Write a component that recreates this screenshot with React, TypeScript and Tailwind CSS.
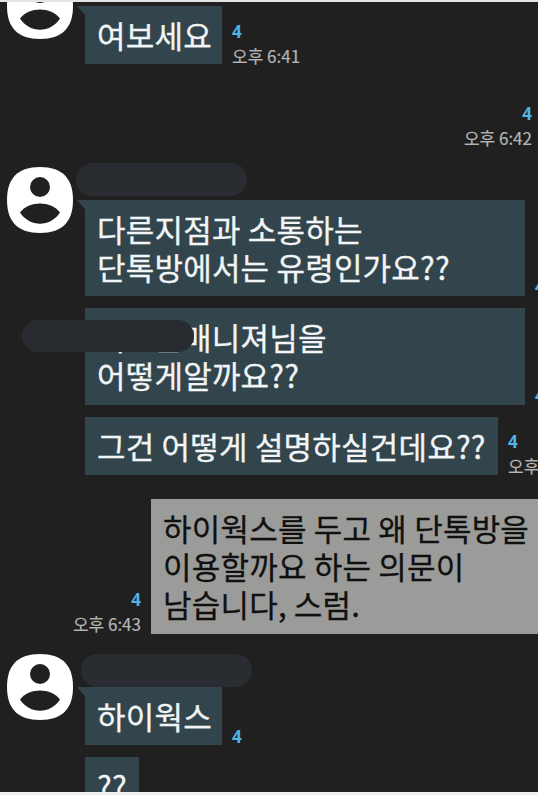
import React from 'react';

interface MetaProps {
  count?: string;
  time?: string;
  className?: string;
}

const Meta: React.FC<MetaProps> = ({ count = '4', time, className = '' }) => (
  <div className={`flex flex-col shrink-0 whitespace-nowrap text-[17px] leading-[24px] text-[#b4b4b4] ${className}`}>
    <span className="font-['Noto_Sans',sans-serif] font-bold text-[17px] text-[#4eb5e6]">{count}</span>
    {time && <span className="[-webkit-text-stroke:0.2px]">{time}</span>}
  </div>
);

const Avatar: React.FC = () => (
  <svg viewBox="0 0 66 66" className="w-[66px] h-[66px] shrink-0">
    <path d="M33 0C55 0 66 11 66 33S55 66 33 66 0 55 0 33 11 0 33 0Z" fill="#fff" />
    <circle cx="33" cy="20" r="10" fill="#202020" />
    <path d="M13 45.5C22 33.5 44 33.5 53 45.5C43 60.5 23 60.5 13 45.5Z" fill="#202020" />
  </svg>
);

interface BubbleProps {
  tail?: boolean;
  mine?: boolean;
  lines?: string[];
  className?: string;
  children?: React.ReactNode;
}

const Bubble: React.FC<BubbleProps> = ({ tail, mine, lines = [], className = '', children }) => (
  <div
    className={`relative shrink-0 pl-3 py-[10px] text-[31px] leading-[38px] tracking-[0.2px] whitespace-nowrap [-webkit-text-stroke:0.3px] ${
      mine ? 'bg-[#9b9c9a] text-[#101010]' : 'bg-[#33454c] text-[#f1f5f6]'
    } ${className}`}
  >
    {tail && (
      <svg viewBox="0 0 8 9" className="absolute right-full top-0 w-2 h-[9px]">
        <path d="M0 0H8V9Z" fill="#33454c" />
      </svg>
    )}
    {children}
    {lines.map((line) => (
      <p key={line}>{line}</p>
    ))}
  </div>
);

const App: React.FC = () => {
  return (
    <div className="w-[538px] h-[795px] overflow-hidden flex flex-col bg-[#202020] border-t-2 border-b-[3px] border-t-[#e4e4e4] border-b-[#f0eeee] font-['Noto_Sans_CJK_KR',sans-serif]">
      <div className="flex h-[62px] shrink-0">
        <div className="ml-[7px] mr-3 -mt-[29px]">
          <Avatar />
        </div>
        <Bubble tail lines={['여보세요']} className="mt-1 w-[137px] h-[58px]" />
        <Meta time="오후 6:41" className="ml-[10px] mt-[18px]" />
      </div>

      <Meta time="오후 6:42" className="items-end mt-[38px] pr-[6px] h-12" />

      {/* Second sender group */}
      <div className="flex mt-3 shrink-0">
        <div className="ml-[7px] mr-[3px] mt-[5px]">
          <Avatar />
        </div>
        <div className="flex flex-col">
          <div className="w-[171px] h-[33px] mt-px rounded-full bg-[#292c31]" />
          <div className="flex flex-col gap-3 ml-[9px] mt-1">
            <div className="flex items-end">
              <Bubble tail lines={['다른지점과 소통하는', '단톡방에서는 유령인가요??']} className="w-[440px] h-24" />
              <Meta className="ml-[10px] -mb-[3px]" />
            </div>
            <div className="flex items-end">
              <Bubble className="w-[440px] h-[97px]">
                <p className="flex">
                  <span className="w-[57px]">이</span>
                  <span className="w-[29px]">은</span>
                  <span>매니져님을</span>
                </p>
                <p>어떻게알까요??</p>
                <div className="absolute -left-[63px] top-3 w-[172px] h-8 rounded-full bg-[#282b30]" />
              </Bubble>
              <Meta className="ml-[10px] -mb-[3px]" />
            </div>
            <div className="flex">
              <Bubble lines={['그건 어떻게 설명하실건데요??']} className="w-[413px] h-[58px]" />
              <Meta time="오후 6:43" className="ml-[10px] mt-[13px] -mb-[3px]" />
            </div>
          </div>
        </div>
      </div>

      <div className="flex justify-end mt-6 shrink-0">
        <Meta time="오후 6:43" className="items-end self-end mr-[10px] -mb-[2px]" />
        <Bubble
          mine
          lines={['하이웍스를 두고 왜 단톡방을', '이용할까요 하는 의문이', '남습니다, 스럼.']}
          className="w-[387px] h-[135px]"
        />
      </div>

      {/* Third sender group */}
      <div className="flex mt-5 shrink-0">
        <div className="ml-[7px] mr-2">
          <Avatar />
        </div>
        <div className="flex flex-col">
          <div className="w-[171px] h-[33px] rounded-full bg-[#292c31]" />
          <div className="flex flex-col gap-3 ml-1">
            <div className="flex items-end">
              <Bubble tail lines={['하이웍스']} className="w-[137px] h-[58px]" />
              <Meta className="ml-[10px] -mb-1" />
            </div>
            <Bubble lines={['??']} className="w-[54px] h-[58px]" />
          </div>
        </div>
      </div>
    </div>
  );
};

export default App;
